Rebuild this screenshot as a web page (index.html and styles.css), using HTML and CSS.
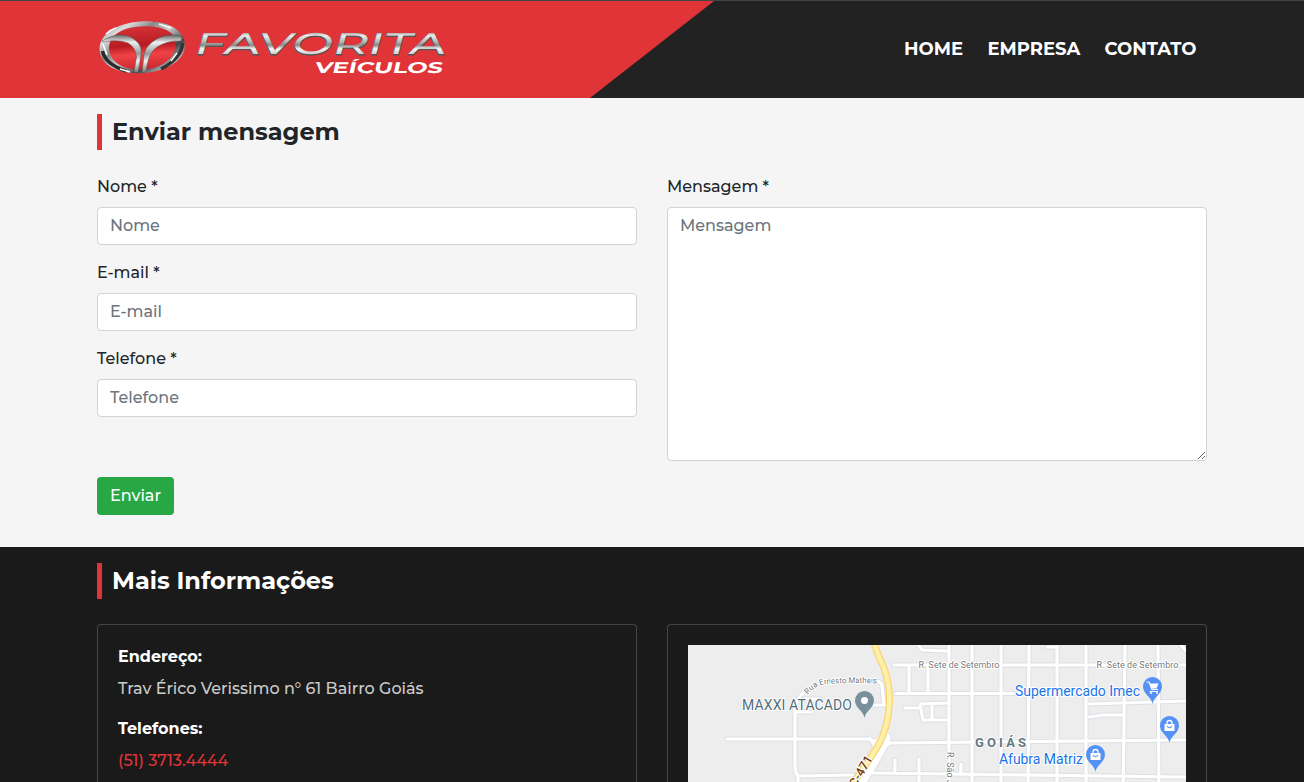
FILE: index.html
```html
<!DOCTYPE html>
<html lang="pt-BR">
<head>
<meta charset="utf-8">
<title>Favorita Veículos</title>
<link rel="stylesheet" href="styles.css">
</head>
<body>
<header class="header">
  <div class="container header-row">
    <svg class="logo" width="356" height="62" viewBox="97 17 356 62" role="img" aria-label="Favorita Veículos">
      <defs>
        <linearGradient id="chrome" x1="0" y1="0" x2="0" y2="1">
          <stop offset="0" stop-color="#777"/><stop offset=".18" stop-color="#888"/><stop offset=".3" stop-color="#eee"/><stop offset=".45" stop-color="#bbb"/>
          <stop offset=".55" stop-color="#888"/><stop offset=".65" stop-color="#f4f4f4"/><stop offset=".8" stop-color="#ccc"/><stop offset="1" stop-color="#555"/>
        </linearGradient>
        <linearGradient id="ring" x1="0" y1="0" x2="1" y2="1">
          <stop offset="0" stop-color="#777"/><stop offset=".2" stop-color="#ddd"/><stop offset=".35" stop-color="#888"/>
          <stop offset=".5" stop-color="#ccc"/><stop offset=".7" stop-color="#444"/><stop offset=".85" stop-color="#bbb"/><stop offset="1" stop-color="#333"/>
        </linearGradient>
        <linearGradient id="branch" x1="0" y1="0" x2="0" y2="1">
          <stop offset="0" stop-color="#666"/><stop offset=".2" stop-color="#eee"/><stop offset=".5" stop-color="#999"/><stop offset=".7" stop-color="#f4f4f4"/><stop offset="1" stop-color="#777"/>
        </linearGradient>
        <linearGradient id="inner" x1="0" y1="0" x2="0" y2="1">
          <stop offset="0" stop-color="#d63338"/><stop offset=".45" stop-color="#b81c22"/><stop offset=".65" stop-color="#ef4246"/><stop offset="1" stop-color="#c8292e"/>
        </linearGradient>
      </defs>
      <g transform="rotate(-4 142 47)">
        <ellipse cx="142" cy="47.300" rx="39" ry="22.500" fill="url(#inner)"/>
        <path fill="url(#ring)" fill-rule="evenodd" d="M99.500 48C99.500 31 118 21.500 142 21.500S185 31 185 47 165 73 142 73 99.500 64 99.500 48ZM109 48C110 61 123 69.500 142 69.500S174 60 176 47 163 26.500 142 26.500 109 34 109 48Z"/>
      </g>
      <path d="M102.500 51Q105 64 126 71" fill="none" stroke="#2b2b2b" stroke-width="3.500"/>
      <path d="M182.500 43Q182 58 161 69" fill="none" stroke="#333" stroke-width="3.500"/>
      <path fill="url(#branch)" stroke="#555" stroke-width=".5" d="M102 41C110 36 117 34 123 35Q133 36 139 44 142 49 141 55L138 72.500 134 72 136.500 57Q136 48 128 43 117 39 104 42Z"/>
      <path fill="url(#branch)" stroke="#555" stroke-width=".5" d="M182 37C170 32 158 37 151 43Q145 48 144 55L142 72.500 146 72Q148 53 157 47 168 40 181 41Z"/>
      <path d="M103 44l4 11M106 34q4-4 10-6M159 24l12 4M171 61l6-8M120 69l10 3" fill="none" stroke="#fff" stroke-width="1.500"/>
      <g transform="translate(193 54) skewX(-15)">
        <text class="logo-name shadow" x="0" y=".8" textLength="251" lengthAdjust="spacingAndGlyphs">FAVORITA</text>
        <text class="logo-name" x="0" y="0" textLength="251" lengthAdjust="spacingAndGlyphs" fill="url(#chrome)">FAVORITA</text>
      </g>
      <g transform="translate(314 73) skewX(-12)">
        <text class="logo-sub" x="0" y="0" textLength="128" lengthAdjust="spacingAndGlyphs">VEÍCULOS</text>
      </g>
    </svg>
    <nav class="nav"><a class="nav-home">HOME</a><a class="nav-company">EMPRESA</a><a class="nav-contact">CONTATO</a></nav>
  </div>
</header>

<main class="contact">
  <div class="container">
    <h2 class="title">Enviar mensagem</h2>
    <form class="columns">
      <div>
        <div class="group"><label class="label">Nome *</label><input class="control" placeholder="Nome"></div>
        <div class="group"><label class="label">E-mail *</label><input class="control" placeholder="E-mail"></div>
        <div class="group"><label class="label">Telefone *</label><input class="control" placeholder="Telefone"></div>
      </div>
      <div class="group"><label class="label">Mensagem *</label><textarea class="control message" placeholder="Mensagem"></textarea></div>
    </form>
    <button class="send">Enviar</button>
  </div>
</main>

<section class="info">
  <div class="container">
    <h2 class="title">Mais Informações</h2>
    <div class="columns">
      <div class="card">
        <p class="term">Endereço:</p>
        <p class="address">Trav Érico Verissimo n° 61 Bairro Goiás</p>
        <p class="term">Telefones:</p>
        <p class="phone">(51) 3713.4444</p>
      </div>
      <div class="card">
        <svg class="map" viewBox="688 645 498 137" width="498" height="137">
          <defs>
            <g id="roads">
              <path d="M727 739H868L880 743M795 707V765Q795 772 798 776V800M798 776L853 775M804 699H821M797 712H812M795 708Q796 699 806 690M876 681Q881 681 882 686L884 705M870 705H889"/>
              <path d="M894 665H1186M896 693.500H1086M909 665V693M928 668V693M917 643L922 650 949 651M905 708H920M949 703L920 704 923 720H949M932 704V720"/>
              <path d="M949 645V800M972 645V800M1001 645V800M1029 645L1028 800M1057 645V800M1086 645V800M1125 645L1123 800M1158 645L1159 800"/>
              <path d="M890 743L1186 740M870 738L876 748M890 743L880 750M873 773L1186 777M895 760V773M919 759V800M961 764V775M1089 704L1186 701M1089 717L1103 715H1124M1047 647H1057M1180 644L1188 653"/>
            </g>
          </defs>
          <rect x="688" y="645" width="498" height="137" fill="#ededed"/>
          <use href="#roads" class="road-edge"/>
          <path class="road-edge wide" d="M884 738Q872 765 849 796"/>
          <use href="#roads" class="road"/>
          <path class="road wide" d="M884 738Q872 765 849 796"/>
          <path class="highway-edge" d="M874 643Q878 655 884 668Q891 688 889 707Q888 725 880 742Q869 762 846 792"/>
          <path class="highway" d="M874 643Q878 655 884 668Q891 688 889 707Q888 725 880 742Q869 762 846 792"/>
          <path id="ernesto" d="M808 695Q815 684 828 684Q850 682 890 684" fill="none"/>
          <text class="street"><textPath href="#ernesto" textLength="73">Rua Ernesto Matheis</textPath></text>
          <text class="street big" x="918.500" y="668" textLength="81">R. Sete de Setembro</text>
          <text class="street big" x="1096.500" y="668" textLength="82">R. Sete de Setembro</text>
          <text class="street big" transform="translate(947 752) rotate(90)">R. São J</text>
          <text class="route" transform="translate(856 788) rotate(-60)" textLength="34">C-471</text>
          <text class="place grey" x="742" y="710" textLength="110">MAXXI ATACADO</text>
          <text class="place" x="1015" y="696" textLength="125">Supermercado Imec</text>
          <text class="place" x="999" y="764" textLength="84">Afubra Matriz</text>
          <text class="district" x="975" y="747" textLength="51">GOIÁS</text>
          <path class="pin" d="M864.500 718C863.500 711 855 708 855 700.500A9.500 9.500 0 0 1 874 700.500C874 708 865.500 711 864.500 718Z"/>
          <circle cx="864.500" cy="700.500" r="3.500" fill="#fff"/>
          <g fill="#5491f5">
            <path d="M1152.500 704C1151.500 697 1143 694 1143 686.500A9.500 9.500 0 0 1 1162 686.500C1162 694 1153.500 697 1152.500 704Z"/>
            <path d="M1169.500 743C1168.500 736 1160 733 1160 725.500A9.500 9.500 0 0 1 1179 725.500C1179 733 1170.500 736 1169.500 743Z"/>
            <path d="M1095.500 772C1094.500 765 1086 762 1086 754.500A9.500 9.500 0 0 1 1105 754.500C1105 762 1096.500 765 1095.500 772Z"/>
          </g>
          <path d="M1146.500 682h2.500l3 7.500h6M1149.500 691.500h8.500" fill="none" stroke="#fff" stroke-width="1.200"/><path d="M1149.500 683.500h9l-2 5h-5z" fill="#fff"/><circle cx="1151" cy="693" r="1" fill="#fff"/><circle cx="1157" cy="693" r="1" fill="#fff"/>
          <g id="bag"><path d="M1164.500 724h10v7h-10z" fill="#fff"/><path d="M1167 724v-1q0-2.500 2.500-2.500t2.500 2.500v1" fill="none" stroke="#fff" stroke-width="1.300"/><path d="M1167 726q2.500 3.500 5 0" fill="none" stroke="#5491f5" stroke-width="1.200"/></g>
          <use href="#bag" x="-74" y="29"/>
        </svg>
      </div>
    </div>
  </div>
</section>
</body>
</html>
```
FILE: styles.css
```css
* { box-sizing: border-box; }
body { margin: 0; height: 782px; display: flex; flex-direction: column; overflow: hidden; background: #1a1a1a; color: #212529; font: 500 16px/24px Montserrat, Inter, sans-serif; }
.container { width: 1110px; margin: 0 auto; }
.header { flex: none; height: 98px; border-top: 1px solid #444; background: #222; position: relative; }
.header::before { content: ""; position: absolute; inset: 0; background: #e03438; clip-path: polygon(0 0, 714px 0, 590px 100%, 0 100%); }
.header-row { position: relative; display: flex; justify-content: space-between; padding-top: 16px; }
.logo { display: block; }
.logo-name { font: 500 30px Montserrat, sans-serif; }
.logo-name.shadow { fill: #555; stroke: #555; stroke-width: .8px; }
.logo-sub { font: 700 15.500px Montserrat, sans-serif; fill: #fff; }
.nav { display: flex; gap: 24px; padding: 20px 10px 0 0; color: #fff; font-size: 18px; font-weight: 700; }
.nav-home { width: 59.500px; }
.nav-company { width: 93px; }
.nav-contact { width: 92.500px; }
.contact { flex: none; height: 449px; padding-top: 16px; background: #f5f5f5; }
.title { margin: 0 0 25px; height: 36px; border-left: 5px solid #e03438; padding-left: 10px; font-size: 24px; line-height: 36px; font-weight: 700; white-space: nowrap; }
.columns { display: grid; grid-template-columns: 540px 540px; gap: 30px; }
.label { display: block; height: 24px; margin-bottom: 8px; }
.group { margin-bottom: 16px; }
.control { display: block; width: 100%; height: 38px; margin: 0; padding: 5px 12px 7px; border: 1px solid #ced4da; border-radius: 4px; background: #fff; font: inherit; }
.control::placeholder { color: #6c757d; opacity: 1; }
.message { height: 254px; padding: 6px 12px; resize: vertical; }
.send { display: block; width: 77px; height: 38px; border: 0; border-radius: 4px; padding: 0; background: #28a745; color: #fff; font: inherit; }
.info { flex: 1; min-height: 0; padding-top: 16px; color: #fff; }
.card { height: 158px; padding: 20px 20px 0; border: 1px solid #444; border-bottom: 0; border-radius: 4px 4px 0 0; }
.card p { margin: 0 0 8px; white-space: nowrap; }
.card .term { font-weight: 700; }
.card .address { margin-bottom: 16px; color: #ccc; }
.card .phone { margin-bottom: 0; color: #e03438; }
.map { display: block; font-family: Roboto, sans-serif; font-weight: 400; }
.pin { fill: #78909c; }
.road-edge { fill: none; stroke: #dcdfe4; stroke-width: 5px; stroke-linejoin: round; stroke-linecap: round; }
.road { fill: none; stroke: #fff; stroke-width: 3.200px; stroke-linejoin: round; stroke-linecap: round; }
.road-edge.wide { stroke-width: 15px; }
.road.wide { stroke-width: 13px; }
.highway-edge { fill: none; stroke: #f8d477; stroke-width: 7px; }
.highway { fill: none; stroke: #fff0a8; stroke-width: 4.500px; }
.map text { stroke: #fff; stroke-width: 2px; paint-order: stroke; stroke-linejoin: round; }
.street { font-size: 8px; fill: #777; }
.street.big { font-size: 9px; }
.map .route { font-size: 12.500px; fill: #703c10; font-weight: 500; }
.place { font-size: 14px; fill: #1a73e8; }
.place.grey { fill: #546e7a; }
.map .district { font-size: 13px; font-weight: 700; fill: #657783; }
```
